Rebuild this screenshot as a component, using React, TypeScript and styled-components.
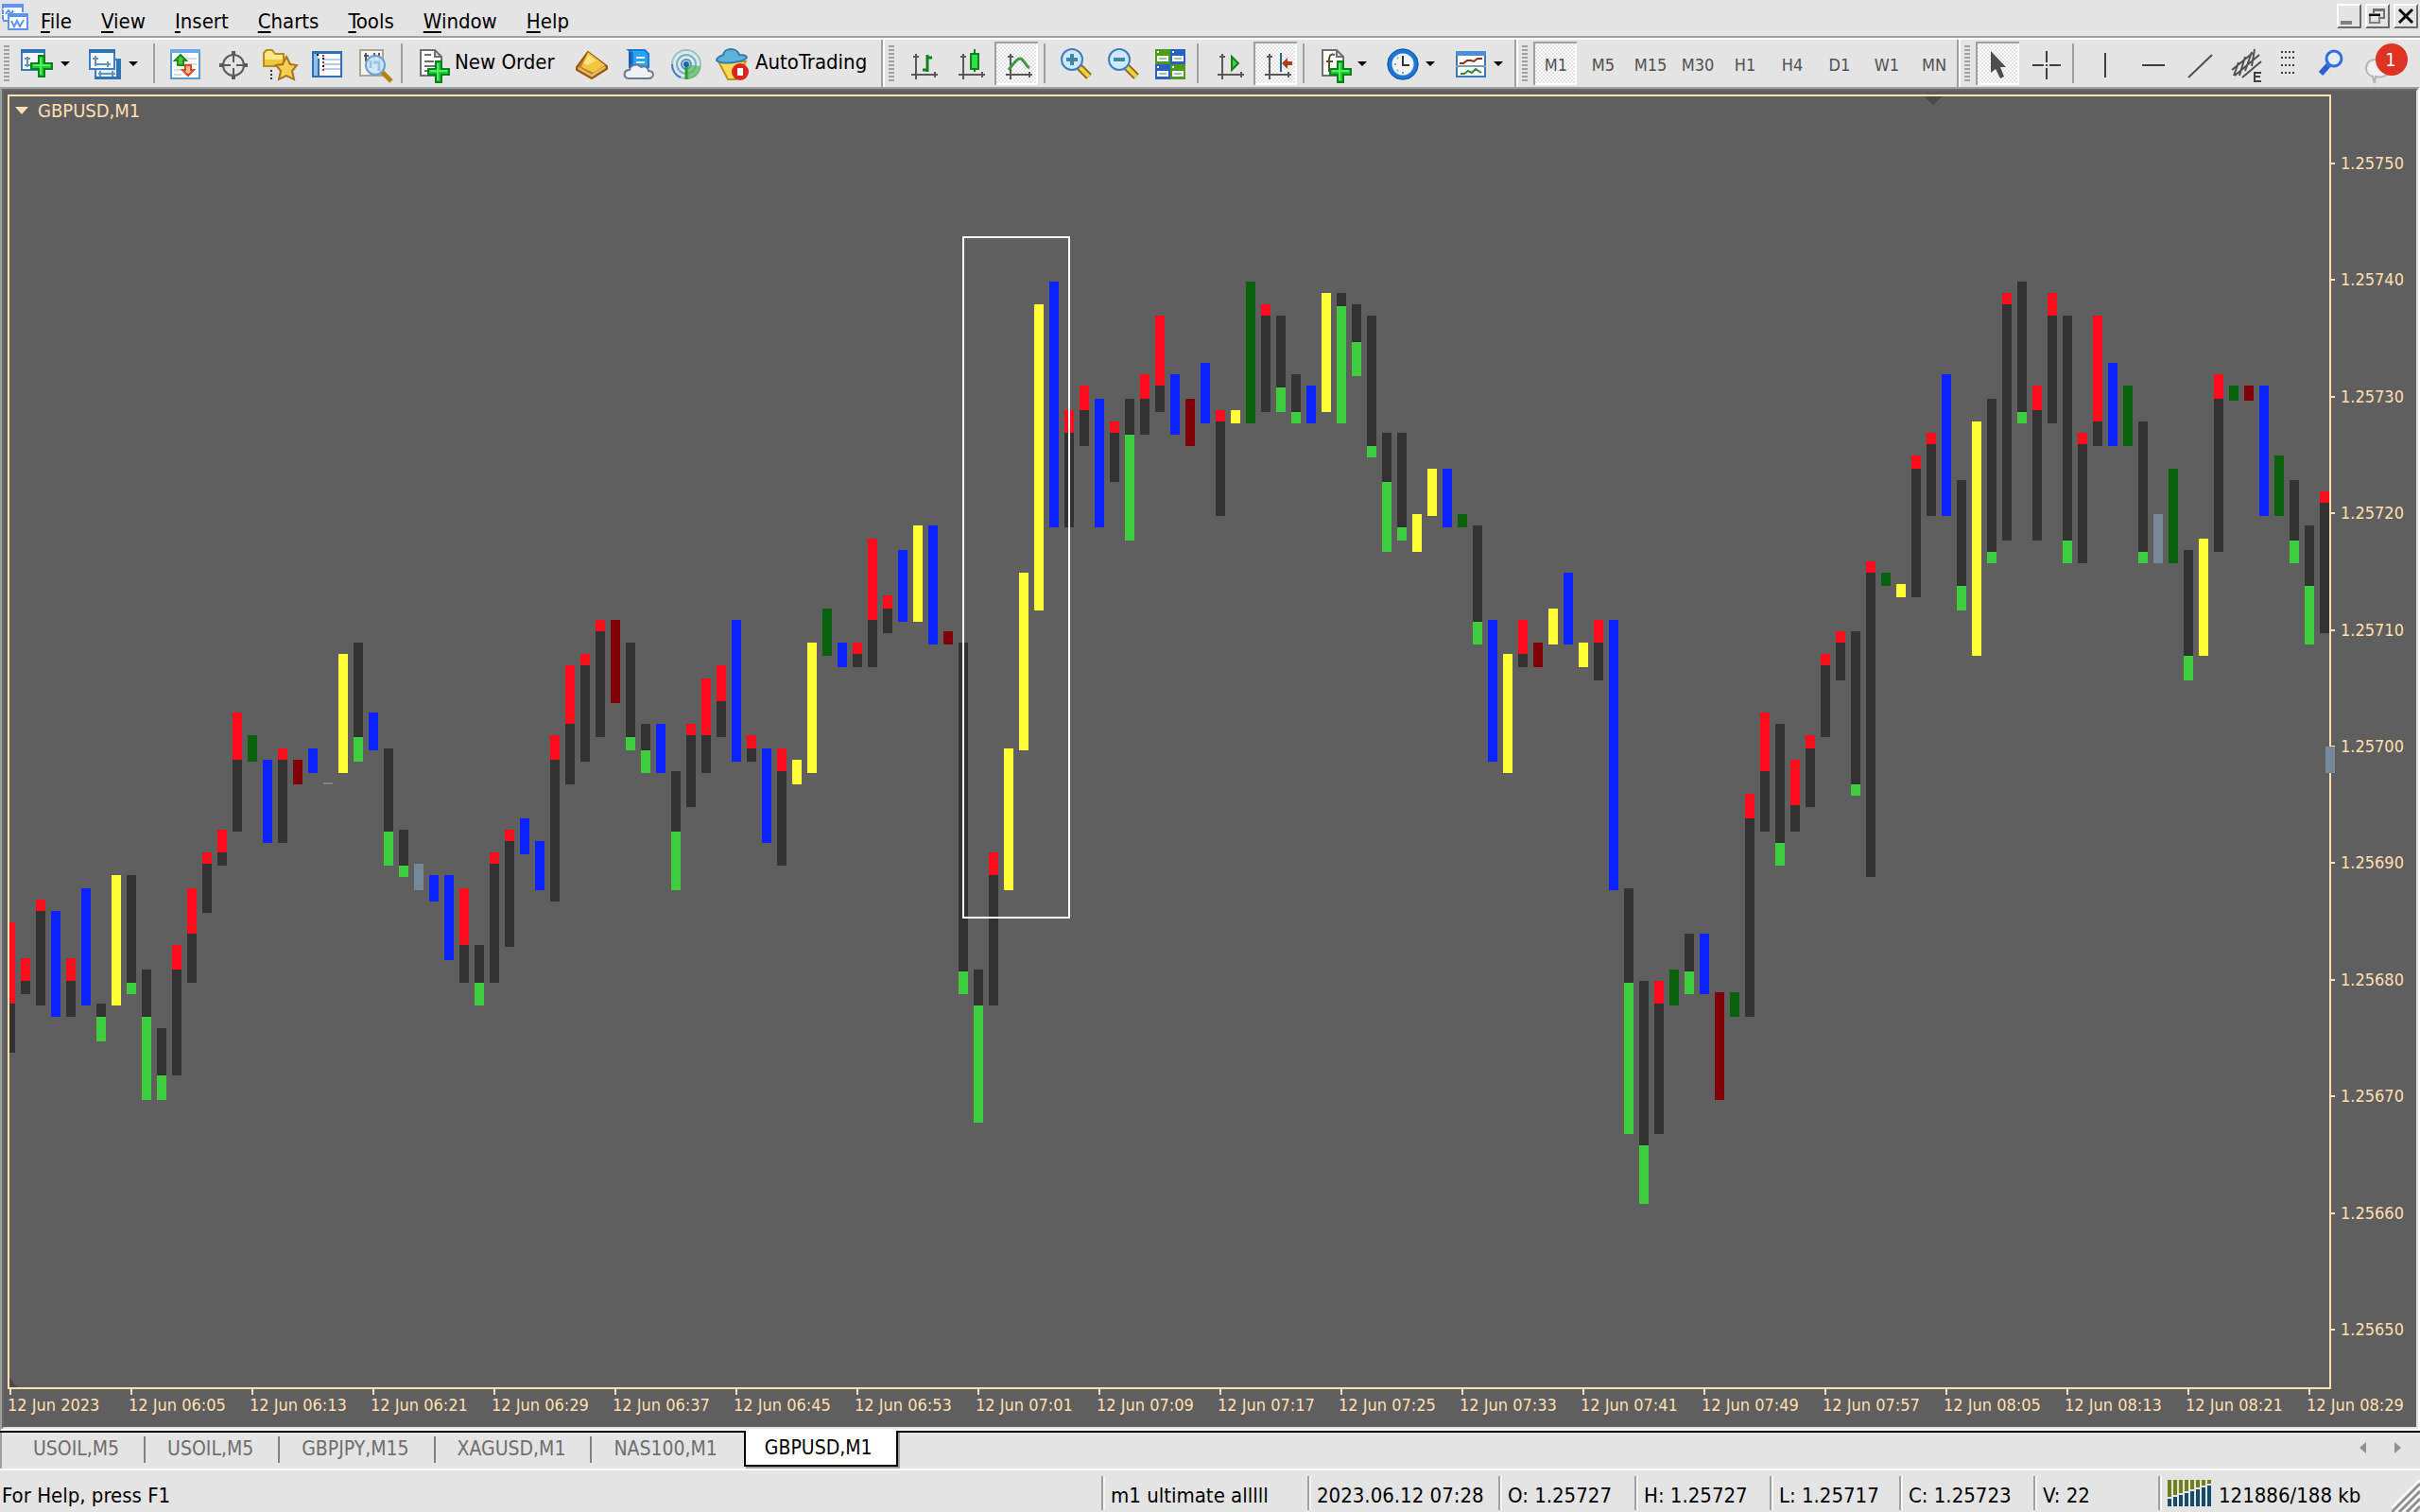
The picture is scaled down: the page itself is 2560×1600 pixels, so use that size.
import React from "react";
import styled, { createGlobalStyle, css } from "styled-components";

const FACE = "#e4e4e4";
const SHADE = "#a0a0a0";
const WHEAT = "#ffdfb0";
const CHART_BG = "#5f5f5f";
const FONT = '"DejaVu Sans Condensed", "DejaVu Sans", "Noto Sans", sans-serif';

const GlobalStyle = createGlobalStyle`
  * { box-sizing: border-box; }
  body { margin: 0; background: ${FACE}; }
  button { font: inherit; color: inherit; border: 0; padding: 0; margin: 0; background: none; }
`;

const Terminal = styled.div`
  display: flex;
  flex-direction: column;
  min-height: 100vh;
  background: ${FACE};
  color: #000;
  font: 22px/26px ${FONT};
  overflow: hidden;
`;

/* ---------- menu ---------- */

const MenuBar = styled.header`
  display: flex;
  align-items: flex-start;
  height: 40px;
  padding-right: 2px;
  border-bottom: 2px solid ${SHADE};
`;

const AppMark = styled.svg`
  width: 30px;
  height: 32px;
  margin-top: 2px;
`;

const MenuList = styled.nav`
  display: flex;
  flex: 1;
  padding-top: 10px;
`;

const MenuItem = styled.button`
  height: 26px;
  padding: 0 18px 0 13px;

  &::first-letter {
    text-decoration: underline;
    text-underline-offset: 3px;
  }
`;

const WindowButtons = styled.div`
  display: flex;
  gap: 4px;
  padding-top: 4px;
`;

const WindowButton = styled.button`
  width: 26px;
  height: 26px;
  border: 2px solid;
  border-color: #fff #696969 #696969 #fff;
  background: ${FACE};

  svg { display: block; }
`;

/* ---------- toolbar ---------- */

const Toolbar = styled.div`
  display: flex;
  height: 52px;
  border-top: 2px solid #fff;
`;

const ToolGroup = styled.div`
  display: flex;
  align-items: center;
  gap: 4px;
  padding: 0 2px 0 4px;
  border-left: 2px solid #fff;
  border-right: 2px solid ${SHADE};

  &:first-child { border-left: 0; }
  &:last-child { flex: 1; border-right: 0; }
`;

const Grip = styled.span`
  width: 6px;
  height: 38px;
  margin-right: 2px;
  background: repeating-linear-gradient(${SHADE} 0 2px, transparent 2px 4px);
`;

const Rule = styled.span`
  width: 2px;
  height: 42px;
  margin: 0 4px 0 2px;
  background: ${SHADE};
`;

const Spring = styled.span`
  flex: 1;
`;

const ToolButton = styled.button<{ $pressed?: boolean; $wide?: number }>`
  display: flex;
  align-items: center;
  width: ${(p) => p.$wide ?? 46}px;
  height: 46px;
  white-space: nowrap;
  ${(p) =>
    p.$pressed &&
    css`
      background: repeating-conic-gradient(#fff 0 25%, ${FACE} 0 50%) 0 0 / 4px 4px;
      box-shadow: inset 2px 2px ${SHADE}, inset -2px -2px #fff;
    `}
`;

const Glyph = styled.svg`
  flex: none;
  width: 46px;
  height: 46px;
`;

const Caret = styled.span`
  width: 10px;
  margin-left: 2px;
  border: 5px solid transparent;
  border-top-color: #000;
  border-bottom: 0;
`;

const ToolLabel = styled.span`
  height: 28px;
  padding-left: 1px;
`;

const PeriodButton = styled(ToolButton)`
  justify-content: center;
  padding: 4px 0 0 2px;
  color: #505050;
  font-size: 18px;
`;

/* ---------- chart ---------- */

const ChartWindow = styled.main`
  position: relative;
  display: grid;
  grid-template: 1fr 40px / 1fr 90px;
  flex: 1;
  min-height: 600px;
  padding: 4px 0 0 4px;
  background: ${CHART_BG};
  border: 2px solid;
  border-color: #696969 ${FACE} ${FACE} #696969;
  color: ${WHEAT};
  font-size: 18px;
  line-height: 20px;
`;

const ChartFrame = styled.div`
  display: flex;
  flex: 1;
  flex-direction: column;
  border: 2px solid;
  border-color: ${SHADE} #fff #fff ${SHADE};
`;

const Plot = styled.section`
  position: relative;
  border: 2px solid ${WHEAT};
`;

const Candles = styled.svg`
  position: absolute;
  inset: 0;
  width: 100%;
  height: 100%;
`;

const ChartTitle = styled.h1`
  position: absolute;
  top: 5px;
  left: 6px;
  display: flex;
  align-items: center;
  gap: 10px;
  margin: 0;
  font: inherit;
  font-size: 20px;

  &::before {
    content: "";
    border: 7px solid transparent;
    border-top: 8px solid ${WHEAT};
    border-bottom: 0;
  }
`;

const PriceAxis = styled.ol`
  display: flex;
  flex-direction: column;
  justify-content: space-between;
  margin: 0;
  padding: 63px 0 53px;
  list-style: none;
`;

const PriceMark = styled.li`
  display: flex;
  align-items: center;
  gap: 6px;

  &::before {
    content: "";
    width: 4px;
    height: 2px;
    background: ${WHEAT};
  }
`;

const TimeAxis = styled.ol`
  display: grid;
  grid-template-columns: repeat(20, calc(100% * 128 / 2454));
  margin: 0 0 0 2px;
  padding: 0 2px 0 0;
  list-style: none;
`;

const TimeMark = styled.li`
  white-space: nowrap;

  &::before {
    content: "";
    display: block;
    width: 2px;
    height: 6px;
    margin-bottom: 1px;
    background: ${WHEAT};
  }

  span { margin-left: -2px; }
`;

const ScaleHandle = styled.span`
  position: absolute;
  right: 86px;
  top: calc(50% - 13px);
  width: 10px;
  height: 28px;
  background: #778899;
`;

/* ---------- tabs ---------- */

const TabBar = styled.nav`
  display: flex;
  align-items: flex-start;
  height: 42px;
  padding-left: 12px;
  border-top: 2px solid #000;
  border-bottom: 2px solid #fff;
  box-shadow: inset 2px 0 ${SHADE};
  font-size: 21px;
`;

const Tab = styled.button<{ $last?: boolean }>`
  height: 28px;
  margin-top: 4px;
  padding: 0 26px 2px 23px;
  border-right: 2px solid ${(p) => (p.$last ? "transparent" : "#808080")};
  color: #6e6e6e;
`;

const ActiveTab = styled.button`
  height: 38px;
  margin-top: -2px;
  padding: 0 25px 0 20px;
  background: #fff;
  border: 2px solid #000;
  border-top: 0;
  box-shadow: 2px 2px ${SHADE};
`;

const TabScroll = styled.div`
  display: flex;
  gap: 30px;
  margin: 10px 20px 0 auto;
`;

const ScrollArrow = styled.button<{ $right?: boolean }>`
  border: 6px solid transparent;
  ${(p) =>
    p.$right
      ? css`
          border-left: 7px solid #909090;
          border-right: 0;
        `
      : css`
          border-right: 7px solid #909090;
          border-left: 0;
        `}
`;

/* ---------- status ---------- */

const StatusBar = styled.footer`
  display: grid;
  grid-template-columns: 1fr 218px 202px 144px 143px 137px 142px 132px 277px;
  height: 44px;
  padding-top: 6px;
  line-height: 42px;
`;

const StatusCell = styled.div`
  display: flex;
  gap: 6px;
  height: 36px;
  padding-left: 8px;
  white-space: nowrap;
  border-left: 2px solid ${SHADE};
  box-shadow: inset 2px 0 #f6f6f6;

  &:first-child {
    padding-left: 2px;
    border: 0;
    box-shadow: none;
  }
`;

const Traffic = styled.svg`
  flex: none;
  width: 48px;
  height: 28px;
  margin-top: 4px;
`;

const SizeGrip = styled.svg`
  flex: none;
  width: 30px;
  height: 38px;
  margin-left: auto;
`;

/* ---------- data ---------- */

type Kind = "R" | "G" | "B" | "Y" | "D" | "M" | "S";

const COLOR: Record<Kind, string> = {
  R: "#ff0d1c",
  G: "#3dcd3f",
  B: "#0b24ff",
  Y: "#ffff38",
  D: "#0b620d",
  M: "#7f0006",
  S: "#778899",
};
const WICK = "#323232";

/* One entry per minute, in points around 1.25700.
   R: high, wick start, low.  G: high, wick end, low.  Others: high, low. */
const SERIES = `
R-15,-22,-26 R-18,-20,-21 R-13,-14,-22 B-14,-23 R-18,-20,-23 B-12,-22 G-22,-23,-25 Y-11,-22
G-11,-20,-21 G-19,-23,-30 G-24,-28,-30 R-17,-19,-28 R-12,-16,-20 R-9,-10,-14 R-7,-9,-10 R3,-1,-7
D1,-1 B-1,-8 R0,-1,-8 M-1,-3 B0,-2 S-3,-3 Y8,-2 G9,1,-1
B3,0 G0,-7,-10 G-7,-10,-11 S-10,-12 B-11,-13 B-11,-18 R-12,-17,-20 G-17,-20,-22
R-9,-10,-20 R-7,-8,-17 B-6,-9 B-8,-12 R1,-1,-13 R7,2,-3 R8,7,-1 R11,10,1
M11,4 G9,1,0 G2,0,-2 B2,-2 G-2,-7,-12 R2,1,-5 R6,1,-2 R7,4,1
B11,-1 R1,0,-1 B0,-8 R0,-2,-10 Y-1,-3 Y9,-2 D12,8 B9,7
R9,8,7 R18,11,7 R13,12,10 B17,11 Y19,11 B19,9 M10,9 G9,-19,-21
G-19,-22,-32 R-9,-11,-22 Y0,-12 Y15,0 Y38,12 B40,19 R29,27,19 R31,29,26
B30,19 R28,27,23 G30,27,18 R32,30,27 R37,31,29 B32,27 M30,26 B33,28
R29,28,20 Y29,28 D40,28 R38,37,29 G37,31,29 G32,29,28 B31,28 Y39,29
G39,38,28 G38,35,32 G37,26,25 G27,23,17 G27,19,18 Y20,17 Y24,20 B24,19
D20,19 G19,11,9 B11,-1 Y8,-2 R11,8,7 M9,7 Y12,9 B15,9
Y9,7 R11,9,6 B11,-12 G-12,-20,-33 G-20,-34,-39 R-20,-22,-33 D-19,-22 G-16,-19,-21
B-16,-21 M-21,-30 D-21,-23 R-4,-6,-23 R3,-2,-7 G2,-8,-10 R-1,-5,-7 R1,0,-5
R8,7,1 R10,9,6 G10,-3,-4 R16,15,-11 D15,14 Y14,13 R25,24,13 R27,26,20
B32,20 G23,14,12 Y28,8 G30,17,16 R39,38,18 G40,29,28 R31,29,18 R39,37,28
G37,18,16 R27,26,16 R37,28,26 B33,26 D31,26 G28,17,16 S20,16 D24,16
G17,8,6 Y18,8 R32,30,17 D31,30 M31,30 B31,20 D25,20 G23,18,16
G19,14,9 R22,21,10`
  .trim()
  .split(/\s+/)
  .map((entry) => ({
    kind: entry[0] as Kind,
    levels: entry.slice(1).split(",").map(Number),
  }));

const STEP = 16;
const BODY = 10;
const yOf = (points: number) => 2 * Math.floor((792.1 - 12.333 * points) / 2) - 102;

const PRICES = Array.from({ length: 11 }, (_, i) => (1.2575 - i * 0.0001).toFixed(5));
const TIMES = [
  "2023", "06:05", "06:13", "06:21", "06:29", "06:37", "06:45", "06:53", "07:01", "07:09",
  "07:17", "07:25", "07:33", "07:41", "07:49", "07:57", "08:05", "08:13", "08:21", "08:29",
];
const MENUS = ["File", "View", "Insert", "Charts", "Tools", "Window", "Help"];
const PERIODS = ["M1", "M5", "M15", "M30", "H1", "H4", "D1", "W1", "MN"];
const TABS = ["USOIL,M5", "USOIL,M5", "GBPJPY,M15", "XAGUSD,M1", "NAS100,M1"];
const STATUS = [
  "m1 ultimate alllll", "2023.06.12 07:28", "O: 1.25727", "H: 1.25727", "L: 1.25717", "C: 1.25723", "V: 22",
];

function CandleBar({ index, kind, levels }: { index: number; kind: Kind; levels: number[] }) {
  const x = index * STEP - 4;
  const top = yOf(levels[0]);
  const bottom = yOf(levels[levels.length - 1]) + 2;
  if (levels.length === 2) {
    return <rect x={x} y={top} width={BODY} height={bottom - top} fill={COLOR[kind]} />;
  }
  const split = yOf(levels[1]) + (kind === "G" ? 2 : 0);
  const [upper, lower] = kind === "G" ? [WICK, COLOR.G] : [COLOR.R, WICK];
  return (
    <>
      <rect x={x} y={top} width={BODY} height={split - top} fill={upper} />
      <rect x={x} y={split} width={BODY} height={bottom - split} fill={lower} />
    </>
  );
}

/* ---------- icons ---------- */

const Plus = ({ x, y }: { x: number; y: number }) => (
  <>
    <path
      d={`M${x - 3} ${y - 11}h6v8h8v6h-8v8h-6v-8h-8v-6h8z`}
      fill="#22c832"
      stroke="#0c7f1c"
      strokeWidth="2"
    />
    <path d={`M${x - 1} ${y - 9}v18M${x - 9} ${y - 1}h18`} stroke="#4cf45a" strokeWidth="2" />
  </>
);

const Axes = () => (
  <g stroke="#585858" strokeWidth="2" fill="none">
    <path d="M17 13v27M12 35h28M14 16h6M37 32v6" />
  </g>
);

const Lens = ({ minus }: { minus?: boolean }) => (
  <>
    <path d="M28 27l10 10" stroke="#8a6a10" strokeWidth="8" />
    <path d="M28 27l10 10" stroke="#f0cf4a" strokeWidth="4" />
    <circle cx="20" cy="19" r="11" fill="#cfeaff" stroke="#3b7fc0" strokeWidth="2" />
    <path d={minus ? "M14 19h12" : "M14 19h12M20 13v12"} stroke="#3f86ac" strokeWidth="4" />
  </>
);

const Sheet = () => (
  <path d="M11 9h15l7 7v20H11zM26 9v7h7" fill="#fdfdfd" stroke="#707070" strokeWidth="2" />
);

const ICONS: Record<string, React.ReactNode> = {
  newChart: (
    <>
      <path d="M7 9h24v21H7z" fill="#f2f8ff" stroke="#3b7fc0" strokeWidth="2" />
      <path d="M6 8h26v4H6z" fill="#2f74b5" />
      <path d="M13 16v11M10 18h6M10 25h12" stroke="#6a92b5" strokeWidth="2" />
      <Plus x={28} y={26} />
    </>
  ),
  profiles: (
    <>
      <path d="M13 19h26v20H13z" fill="#e6f1ff" stroke="#3b7fc0" strokeWidth="2" />
      <path d="M35 19h5v21H12v-3h23z" fill="#2f74b5" />
      <path d="M18 31v6M16 34h18M31 31v6" stroke="#6a92b5" strokeWidth="2" />
      <path d="M7 9h26v20H7z" fill="#f2f8ff" stroke="#3b7fc0" strokeWidth="2" />
      <path d="M6 8h28v4H6z" fill="#2f74b5" />
      <path d="M13 15v11M10 18h6M13 24h16M26 21v6" stroke="#6a92b5" strokeWidth="2" fill="none" />
    </>
  ),
  market: (
    <>
      <path d="M9 9h30v30H9z" fill="#fff" stroke="#5a9ad8" strokeWidth="2" />
      <path d="M8 8h32v4H8z" fill="#6aa9e4" />
      <path d="M24 18h12M24 24h12M12 30h8M12 35h8" stroke="#dcdcdc" strokeWidth="2" />
      <path d="M19 14l6 6h-3v5h-6v-5h-3z" fill="#4cc83e" stroke="#1c8a1c" strokeWidth="2" />
      <path d="M27 36l6-6h-3v-5h-6v5h-3z" fill="#f8b8a0" stroke="#dc4a1c" strokeWidth="2" />
    </>
  ),
  dataWindow: (
    <g fill="none" stroke="#5a5a5a" strokeWidth="2">
      <circle cx="25" cy="25" r="11" />
      <path d="M25 10v12M25 28v12M10 25h12M28 25h12" />
      <path d="M25 10v5M25 35v5M10 25h5M35 25h5" strokeWidth="4" />
    </g>
  ),
  navigator: (
    <>
      <path d="M7 26V12l3-3h6l3 4h9v13z" fill="#ffe88a" stroke="#b58c18" strokeWidth="2" />
      <path d="M8 19h19v6H8z" fill="#f0c63c" />
      <path d="M15 30v12" stroke="#333" strokeWidth="2" strokeDasharray="2 2" />
      <path d="M31 16l4 8 7 1-5 6 2 9-8-4-8 4 2-9-5-6 7-1z" fill="#f6cf52" stroke="#a8741c" strokeWidth="2" />
    </>
  ),
  terminal: (
    <>
      <path d="M9 11h30v26H9z" fill="#fff" stroke="#2f6fb5" strokeWidth="2" />
      <path d="M8 10h32v3H8z" fill="#2f6fb5" />
      <path d="M10 13h4v23h-4z" fill="#8fc0ee" />
      <path d="M15 18v18" stroke="#3b6ea8" strokeWidth="2" />
      <path d="M20 19h18M20 24h18M20 29h18" stroke="#b8c8f0" strokeWidth="2" />
      <path d="M13 14h2M19 18h2M19 26h2" stroke="#000" strokeWidth="2" />
      <path d="M19 15h2M19 22h2M19 30h2" stroke="#e02020" strokeWidth="2" />
    </>
  ),
  tester: (
    <>
      <path d="M9 9h24v27H9z" fill="#f6f4ee" stroke="#aaa590" strokeWidth="2" />
      <path d="M15 12v9M13 15h5M24 12v7M29 12v8" stroke="#555" strokeWidth="2" />
      <path d="M32 32l10 10" stroke="#b5820e" strokeWidth="5" />
      <circle cx="25" cy="25" r="10" fill="#cfe6f8" fillOpacity=".9" stroke="#6aa0d4" strokeWidth="2" />
      <path d="M20 20v8M23 22h6v9" fill="none" stroke="#9cc4e0" strokeWidth="3" />
    </>
  ),
  newOrder: (
    <>
      <Sheet />
      <path d="M15 14h7M15 21h10M15 26h12M15 31h6" stroke="#707070" strokeWidth="2" />
      <Plus x={30} y={32} />
    </>
  ),
  editor: (
    <>
      <path d="M20 11l20 15v3L24 39 8 30v-3z" fill="#c08228" stroke="#8f5a10" strokeWidth="2" />
      <path d="M20 11l18 14-12 8-13-6z" fill="#f2c440" />
      <path d="M21 14l8 6-10 5-4-2z" fill="#ffe27a" />
      <path d="M10 28l14 8 14-9" fill="none" stroke="#ecc070" strokeWidth="2" />
    </>
  ),
  cloud: (
    <>
      <path d="M13 9l4 3v16h-4z" fill="#1560b8" />
      <path d="M13 9h17l4 4v14H17V12z" fill="#2aa4f4" stroke="#1878d0" strokeWidth="2" />
      <path d="M21 17h9M21 22h9" stroke="#e4f6ff" strokeWidth="2" />
      <path
        d="M13 39c-6 0-6-9 1-9 1-6 9-7 12-3 5-2 8 1 8 4 7 0 6 8 0 8z"
        fill="#eef1f8"
        stroke="#6c7694"
        strokeWidth="2"
      />
    </>
  ),
  signals: (
    <g fill="none" strokeWidth="2">
      <circle cx="24" cy="24" r="15" fill="#dcebe8" stroke="#9cc0c4" />
      <circle cx="24" cy="24" r="10" stroke="#7eaccb" />
      <circle cx="24" cy="24" r="5" stroke="#4f8fc8" />
      <path d="M24 24v16c8 0 15-5 15-14" fill="#58b85a" fillOpacity=".7" stroke="none" />
      <path d="M9 24a15 15 0 0 0 9 14" stroke="#4b78c4" />
      <path d="M24 24v16" stroke="#27992c" strokeWidth="3" />
      <circle cx="24" cy="24" r="3" fill="#1e5fb0" />
    </g>
  ),
  auto: (
    <>
      <path d="M8 21h29l-10 19h-9z" fill="#f7d95c" stroke="#bd9320" strokeWidth="2" />
      <path d="M6 20c0-4 6-5 7-6 1-8 15-8 17 0 3 0 8 0 8 3-4 5-26 8-32 3z" fill="#5fb2dc" stroke="#2e7ba8" strokeWidth="2" />
      <circle cx="31" cy="32" r="9" fill="#d8261c" />
      <path d="M28 28h6v8h-6z" fill="#fff" />
    </>
  ),
  bars: (
    <>
      <Axes />
      <path d="M29 14v18M29 17h5M24 30h5" stroke="#12801c" strokeWidth="3" />
    </>
  ),
  candles: (
    <>
      <Axes />
      <path d="M29 8v24" stroke="#12801c" strokeWidth="2" />
      <path d="M25 13h8v16h-8z" fill="#2fe048" stroke="#12801c" strokeWidth="2" />
    </>
  ),
  line: (
    <>
      <Axes />
      <path d="M15 30c4-5 8-12 12-12s5 7 10 10" fill="none" stroke="#3c9c44" strokeWidth="3" />
    </>
  ),
  zoomIn: <Lens />,
  zoomOut: <Lens minus />,
  tile: (
    <>
      <path d="M8 8h16v16H8zM24 24h16v16H24z" fill="#4d9a1c" />
      <path d="M24 8h16v16H24zM8 24h16v16H8z" fill="#2a5fc8" />
      <path d="M10 15h12v6H10zM26 15h12v6H26zM10 31h12v6H10zM26 31h12v6H26z" fill="#fff" />
      <path d="M12 18h8M28 18h8M12 34h8M28 34h8" stroke="#9fc4a0" strokeWidth="2" />
      <path d="M10 11h2M26 11h2M10 27h2M26 27h2" stroke="#fff" strokeWidth="2" />
    </>
  ),
  scroll: (
    <>
      <Axes />
      <path d="M27 16l7 7-7 7z" fill="#43d04e" stroke="#16801e" strokeWidth="2" />
    </>
  ),
  shift: (
    <>
      <Axes />
      <path d="M29 12v20" stroke="#1d6a90" strokeWidth="2" />
      <path d="M30 23l6-6v4h5v4h-5v4z" fill="#b23a14" />
    </>
  ),
  indicators: (
    <>
      <Sheet />
      <path d="M24 14c-5-2-6 2-6 6v12M15 21h7" fill="none" stroke="#5a5030" strokeWidth="2" />
      <Plus x={30} y={32} />
    </>
  ),
  clock: (
    <>
      <circle cx="24" cy="24" r="14" fill="#eef4fa" stroke="#1b78d8" strokeWidth="5" />
      <circle cx="24" cy="24" r="16" fill="none" stroke="#1a4f94" />
      <path d="M24 15v10h7" fill="none" stroke="#333" strokeWidth="2" />
      <path d="M24 32v2M15 24h2M18 17l1 1M18 31l1-1" stroke="#999" strokeWidth="2" />
    </>
  ),
  templates: (
    <>
      <path d="M9 11h30v26H9z" fill="#fff" stroke="#3b78b8" strokeWidth="2" />
      <path d="M8 10h32v5H8z" fill="#4a8fd8" />
      <path d="M8 26h32" stroke="#7aa0b8" strokeWidth="2" />
      <path d="M12 23h4l4-3h4l3 1 4-3h5" fill="none" stroke="#8f2a12" strokeWidth="2" />
      <path d="M13 34h4l4-3 4 2 4-4 6 4" fill="none" stroke="#2c8a34" strokeWidth="2" />
    </>
  ),
  cursor: <path d="M16 10v23l5-4 5 10 4-2-4-10h6z" fill="#4e4e4e" />,
  cross: <path d="M25 10v12M25 28v12M10 25h12M28 25h12M24 25h2" stroke="#404040" strokeWidth="2" />,
  vline: <path d="M25 12v26" stroke="#404040" strokeWidth="2" />,
  hline: <path d="M14 25h24" stroke="#404040" strokeWidth="2" />,
  trend: <path d="M13 38l25-24" stroke="#505050" strokeWidth="2" />,
  channel: (
    <>
      <path
        d="M9 30l22-18M12 36l26-22M20 38l20-17M16 22l-5 14M23 16l-6 20M30 11l-7 20M33 8l-3 18"
        stroke="#505050"
        strokeWidth="2"
      />
      <path d="M40 33h-7v9h7M33 37h6" fill="none" stroke="#404040" strokeWidth="2" />
    </>
  ),
  fibo: (
    <path d="M11 11h16M11 17h16M11 25h16M11 33h16" stroke="#404040" strokeWidth="2" strokeDasharray="2 2" />
  ),
  search: (
    <>
      <path d="M11 25L3 34" stroke="#2a63cc" strokeWidth="6" />
      <circle cx="17" cy="18" r="8" fill="#e6eefc" stroke="#2f6fe0" strokeWidth="3" />
    </>
  ),
  news: (
    <>
      <path d="M10 19c14-2 18 6 15 13-3 6-10 6-14 5l-1 7-2-7C-2 34-1 20 10 19z" fill="#f0f0f4" stroke="#b4b4b4" strokeWidth="2" />
      <circle cx="28" cy="19" r="17" fill="#de3222" />
    </>
  ),
};

const Icon = ({ name, children }: { name: string; children?: React.ReactNode }) => (
  <Glyph viewBox="0 0 46 46" aria-hidden="true">
    {ICONS[name]}
    {children}
  </Glyph>
);

const Tool = ({ name, pressed }: { name: string; pressed?: boolean }) => (
  <ToolButton aria-label={name} aria-pressed={pressed} $pressed={pressed}>
    <Icon name={name} />
  </ToolButton>
);

const DropTool = ({ name }: { name: string }) => (
  <ToolButton aria-label={name} aria-haspopup="menu" $wide={68}>
    <Icon name={name} />
    <Caret />
  </ToolButton>
);

export default function App() {
  return (
    <Terminal>
      <GlobalStyle />
      <MenuBar>
        <AppMark viewBox="0 0 30 32" aria-hidden="true">
          <path d="M3 3h21v17H3z" fill="#fff" stroke="#5f93f0" strokeWidth="2" strokeDasharray="5 1" />
          <path d="M2 4h23" stroke="#5f93f0" strokeWidth="4" />
          <path d="M6 13l3-4 3 4 2-4" fill="none" stroke="#5f93f0" strokeWidth="2" />
          <path d="M9 13h20v16H9z" fill="#fff" stroke="#5f93f0" strokeWidth="2" />
          <path d="M8 14h22" stroke="#5f93f0" strokeWidth="4" />
          <path d="M12 20l3 6 3-6 3 6 4-7" fill="none" stroke="#5f93f0" strokeWidth="2" />
        </AppMark>
        <MenuList>
          {MENUS.map((m) => (
            <MenuItem key={m}>{m}</MenuItem>
          ))}
        </MenuList>
        <WindowButtons>
          <WindowButton aria-label="Minimize">
            <svg width="22" height="22"><path d="M2 18h12" stroke="#808080" strokeWidth="4" /></svg>
          </WindowButton>
          <WindowButton aria-label="Restore">
            <svg width="22" height="22" fill="none" strokeWidth="2">
              <path d="M7 9V4h11v9h-4M7 5h11" stroke="#707070" />
              <path d="M3 18V9h10v9z" stroke="#808080" />
              <path d="M2 10h12" stroke="#101010" />
            </svg>
          </WindowButton>
          <WindowButton aria-label="Close">
            <svg width="22" height="22"><path d="M4 4l14 14M18 4L4 18" stroke="#000" strokeWidth="3" /></svg>
          </WindowButton>
        </WindowButtons>
      </MenuBar>

      <Toolbar role="toolbar">
        <ToolGroup>
          <Grip />
          <DropTool name="newChart" />
          <DropTool name="profiles" />
          <Rule />
          <Tool name="market" />
          <Tool name="dataWindow" />
          <Tool name="navigator" />
          <Tool name="terminal" />
          <Tool name="tester" />
          <Rule />
          <ToolButton $wide={164}>
            <Icon name="newOrder" />
            <ToolLabel>New Order</ToolLabel>
          </ToolButton>
          <Tool name="editor" />
          <Tool name="cloud" />
          <Tool name="signals" />
          <ToolButton $wide={178}>
            <Icon name="auto" />
            <ToolLabel>AutoTrading</ToolLabel>
          </ToolButton>
        </ToolGroup>
        <ToolGroup>
          <Grip />
          <Tool name="bars" />
          <Tool name="candles" />
          <Tool name="line" pressed />
          <Rule />
          <Tool name="zoomIn" />
          <Tool name="zoomOut" />
          <Tool name="tile" />
          <Rule />
          <Tool name="scroll" />
          <Tool name="shift" pressed />
          <Rule />
          <DropTool name="indicators" />
          <DropTool name="clock" />
          <DropTool name="templates" />
        </ToolGroup>
        <ToolGroup>
          <Grip />
          {PERIODS.map((p) => (
            <PeriodButton key={p} $pressed={p === "M1"}>{p}</PeriodButton>
          ))}
        </ToolGroup>
        <ToolGroup>
          <Grip />
          <Tool name="cursor" pressed />
          <Tool name="cross" />
          <Rule />
          <Tool name="vline" />
          <Tool name="hline" />
          <Tool name="trend" />
          <Tool name="channel" />
          <Tool name="fibo" />
          <Tool name="search" />
          <ToolButton aria-label="1 notification">
            <Icon name="news">
              <text x="27" y="26" textAnchor="middle" fontSize="20" fill="#fff">1</text>
            </Icon>
          </ToolButton>
          <Spring />
        </ToolGroup>
      </Toolbar>

      <ChartFrame>
        <ChartWindow>
          <Plot>
            <Candles viewBox="0 0 2454 1366" preserveAspectRatio="none" shapeRendering="crispEdges">
              <path d="M2026 0h18l-9 10zM0 1356l8 10H0z" fill="#4b4b4b" />
              {SERIES.map((bar, i) => (
                <CandleBar key={i} index={i} {...bar} />
              ))}
              <rect x="1009" y="149" width="112" height="720" fill="none" stroke="#fff" strokeWidth="2" />
            </Candles>
            <ChartTitle>GBPUSD,M1</ChartTitle>
          </Plot>
          <PriceAxis>
            {PRICES.map((p) => (
              <PriceMark key={p}>{p}</PriceMark>
            ))}
          </PriceAxis>
          <TimeAxis>
            {TIMES.map((t) => (
              <TimeMark key={t}>
                <span>12 Jun {t}</span>
              </TimeMark>
            ))}
          </TimeAxis>
          <ScaleHandle />
        </ChartWindow>
      </ChartFrame>

      <TabBar>
        {TABS.map((t, i) => (
          <Tab key={i} $last={i === TABS.length - 1}>{t}</Tab>
        ))}
        <ActiveTab aria-current="page">GBPUSD,M1</ActiveTab>
        <TabScroll>
          <ScrollArrow aria-label="Scroll tabs left" />
          <ScrollArrow aria-label="Scroll tabs right" $right />
        </TabScroll>
      </TabBar>

      <StatusBar>
        <StatusCell>For Help, press F1</StatusCell>
        {STATUS.map((s) => (
          <StatusCell key={s}>{s}</StatusCell>
        ))}
        <StatusCell>
          <Traffic viewBox="0 0 48 28" shapeRendering="crispEdges" aria-hidden="true">
            {Array.from({ length: 8 }, (_, i) => (
              <React.Fragment key={i}>
                <rect x={i * 6} y="0" width="4" height={18 - i * 2} fill="#6f7f1c" />
                <rect x={i * 6} y={20 - i * 2} width="4" height={8 + i * 2} fill="#164a66" />
              </React.Fragment>
            ))}
          </Traffic>
          <span>121886/188 kb</span>
          <SizeGrip viewBox="0 0 30 38" aria-hidden="true">
            <path d="M0 38L30 8M8 38l22-22M16 38l14-14M24 38l6-6" stroke="#909090" strokeWidth="3" />
            <path d="M-4 38L30 4M4 38l26-26M12 38l18-18M20 38l10-10" stroke="#fff" strokeWidth="2" />
          </SizeGrip>
        </StatusCell>
      </StatusBar>
    </Terminal>
  );
}
